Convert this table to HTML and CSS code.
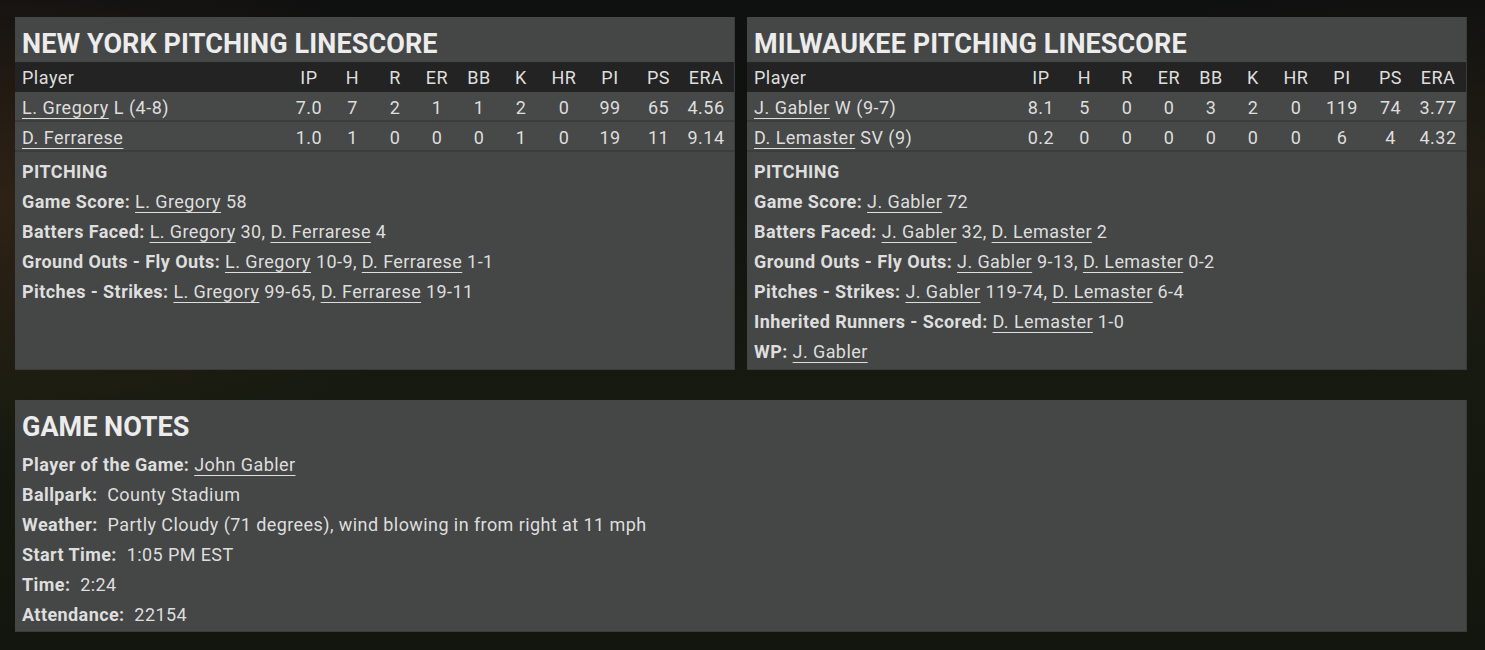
FILE: index.html
```html
<!DOCTYPE html>
<html>
<head>
<meta charset="utf-8">
<link rel="stylesheet" href="styles.css">
</head>
<body>
<div class="page">
  <div class="top">
    <section class="panel">
      <h2 class="title">NEW YORK PITCHING LINESCORE</h2>
      <div class="table">
        <div class="row head">
          <span class="pl">Player</span><span>IP</span><span>H</span><span>R</span><span>ER</span><span>BB</span><span>K</span><span>HR</span><span>PI</span><span>PS</span><span>ERA</span>
        </div>
        <div class="row">
          <span class="pl"><a>L. Gregory</a> L (4-8)</span><span>7.0</span><span>7</span><span>2</span><span>1</span><span>1</span><span>2</span><span>0</span><span>99</span><span>65</span><span>4.56</span>
        </div>
        <div class="row">
          <span class="pl"><a>D. Ferrarese</a></span><span>1.0</span><span>1</span><span>0</span><span>0</span><span>0</span><span>1</span><span>0</span><span>19</span><span>11</span><span>9.14</span>
        </div>
      </div>
      <div class="notes">
        <div class="line"><b>PITCHING</b></div>
        <div class="line"><b>Game Score:</b> <a>L. Gregory</a> 58</div>
        <div class="line"><b>Batters Faced:</b> <a>L. Gregory</a> 30, <a>D. Ferrarese</a> 4</div>
        <div class="line"><b>Ground Outs - Fly Outs:</b> <a>L. Gregory</a> 10-9, <a>D. Ferrarese</a> 1-1</div>
        <div class="line"><b>Pitches - Strikes:</b> <a>L. Gregory</a> 99-65, <a>D. Ferrarese</a> 19-11</div>
      </div>
    </section>
    <section class="panel">
      <h2 class="title">MILWAUKEE PITCHING LINESCORE</h2>
      <div class="table">
        <div class="row head">
          <span class="pl">Player</span><span>IP</span><span>H</span><span>R</span><span>ER</span><span>BB</span><span>K</span><span>HR</span><span>PI</span><span>PS</span><span>ERA</span>
        </div>
        <div class="row">
          <span class="pl"><a>J. Gabler</a> W (9-7)</span><span>8.1</span><span>5</span><span>0</span><span>0</span><span>3</span><span>2</span><span>0</span><span>119</span><span>74</span><span>3.77</span>
        </div>
        <div class="row">
          <span class="pl"><a>D. Lemaster</a> SV (9)</span><span>0.2</span><span>0</span><span>0</span><span>0</span><span>0</span><span>0</span><span>0</span><span>6</span><span>4</span><span>4.32</span>
        </div>
      </div>
      <div class="notes">
        <div class="line"><b>PITCHING</b></div>
        <div class="line"><b>Game Score:</b> <a>J. Gabler</a> 72</div>
        <div class="line"><b>Batters Faced:</b> <a>J. Gabler</a> 32, <a>D. Lemaster</a> 2</div>
        <div class="line"><b>Ground Outs - Fly Outs:</b> <a>J. Gabler</a> 9-13, <a>D. Lemaster</a> 0-2</div>
        <div class="line"><b>Pitches - Strikes:</b> <a>J. Gabler</a> 119-74, <a>D. Lemaster</a> 6-4</div>
        <div class="line"><b>Inherited Runners - Scored:</b> <a>D. Lemaster</a> 1-0</div>
        <div class="line"><b>WP:</b> <a>J. Gabler</a></div>
      </div>
    </section>
  </div>
  <section class="panel game">
    <h2 class="title big">GAME NOTES</h2>
    <div class="notes gnotes">
      <div class="line"><b>Player of the Game:</b> <a>John Gabler</a></div>
      <div class="line"><b>Ballpark:</b>&nbsp; County Stadium</div>
      <div class="line"><b>Weather:</b>&nbsp; Partly Cloudy (71 degrees), wind blowing in from right at 11 mph</div>
      <div class="line"><b>Start Time:</b>&nbsp; 1:05 PM EST</div>
      <div class="line"><b>Time:</b>&nbsp; 2:24</div>
      <div class="line"><b>Attendance:</b>&nbsp; 22154</div>
    </div>
  </section>
</div>
</body>
</html>
```
FILE: styles.css
```css
* { box-sizing: border-box; }
html, body { margin: 0; padding: 0; }
body {
  width: 1485px;
  height: 650px;
  overflow: hidden;
  font-family: Roboto, "Liberation Sans", sans-serif;
  color: #dedede;
  background:
    radial-gradient(ellipse 500px 260px at 0px 200px, rgba(70,45,25,0.55), rgba(70,45,25,0) 100%),
    radial-gradient(ellipse 600px 200px at 1485px 180px, rgba(60,45,25,0.4), rgba(60,45,25,0) 100%),
    linear-gradient(180deg, #0f1010 0%, #121410 30%, #161a10 60%, #12160e 100%);
}
.page {
  padding: 17px 18px 0 15px;
  display: flex;
  flex-direction: column;
  gap: 30px;
}
.top {
  display: grid;
  grid-template-columns: 720px 720px;
  gap: 12px;
  height: 353px;
}
.panel {
  background: #454646;
  border-right: 1px solid #3a3b3a;
  border-bottom: 1px solid #3a3b3a;
}
.title {
  margin: 0;
  padding: 12px 7px 0 7px;
  height: 45px;
  line-height: 30px;
  font-size: 27px;
  font-weight: 700;
  color: #ececec;
  letter-spacing: 0.1px;
}
.title.big { height: 50px; padding-top: 12px; font-size: 27px; letter-spacing: 0px; }
.row {
  display: grid;
  grid-template-columns: 1fr 44px 43px 42px 42px 42px 42px 44px 48px 49px 46px;
  height: 30px;
  align-items: center;
  padding: 0 5px 0 7px;
  font-size: 18px;
  letter-spacing: 0.5px;
  border-bottom: 2px solid #3b3c3c;
}
.row span { text-align: center; white-space: nowrap; }
.row span.pl { text-align: left; }
.row.head { background: #232323; border-bottom: none; }
.row:not(.head) { background: #474848; padding-top: 2px; }
.notes { padding: 5px 7px 0 7px; }
.gnotes { padding-top: 0; }
.line {
  height: 30px;
  line-height: 30px;
  font-size: 18px;
  letter-spacing: 0.42px;
  white-space: nowrap;
}
.line b { font-weight: 700; }
a {
  color: inherit;
  text-decoration: underline;
  text-decoration-thickness: 1px;
  text-underline-offset: 4px;
}
.game { height: 232px; }
```
